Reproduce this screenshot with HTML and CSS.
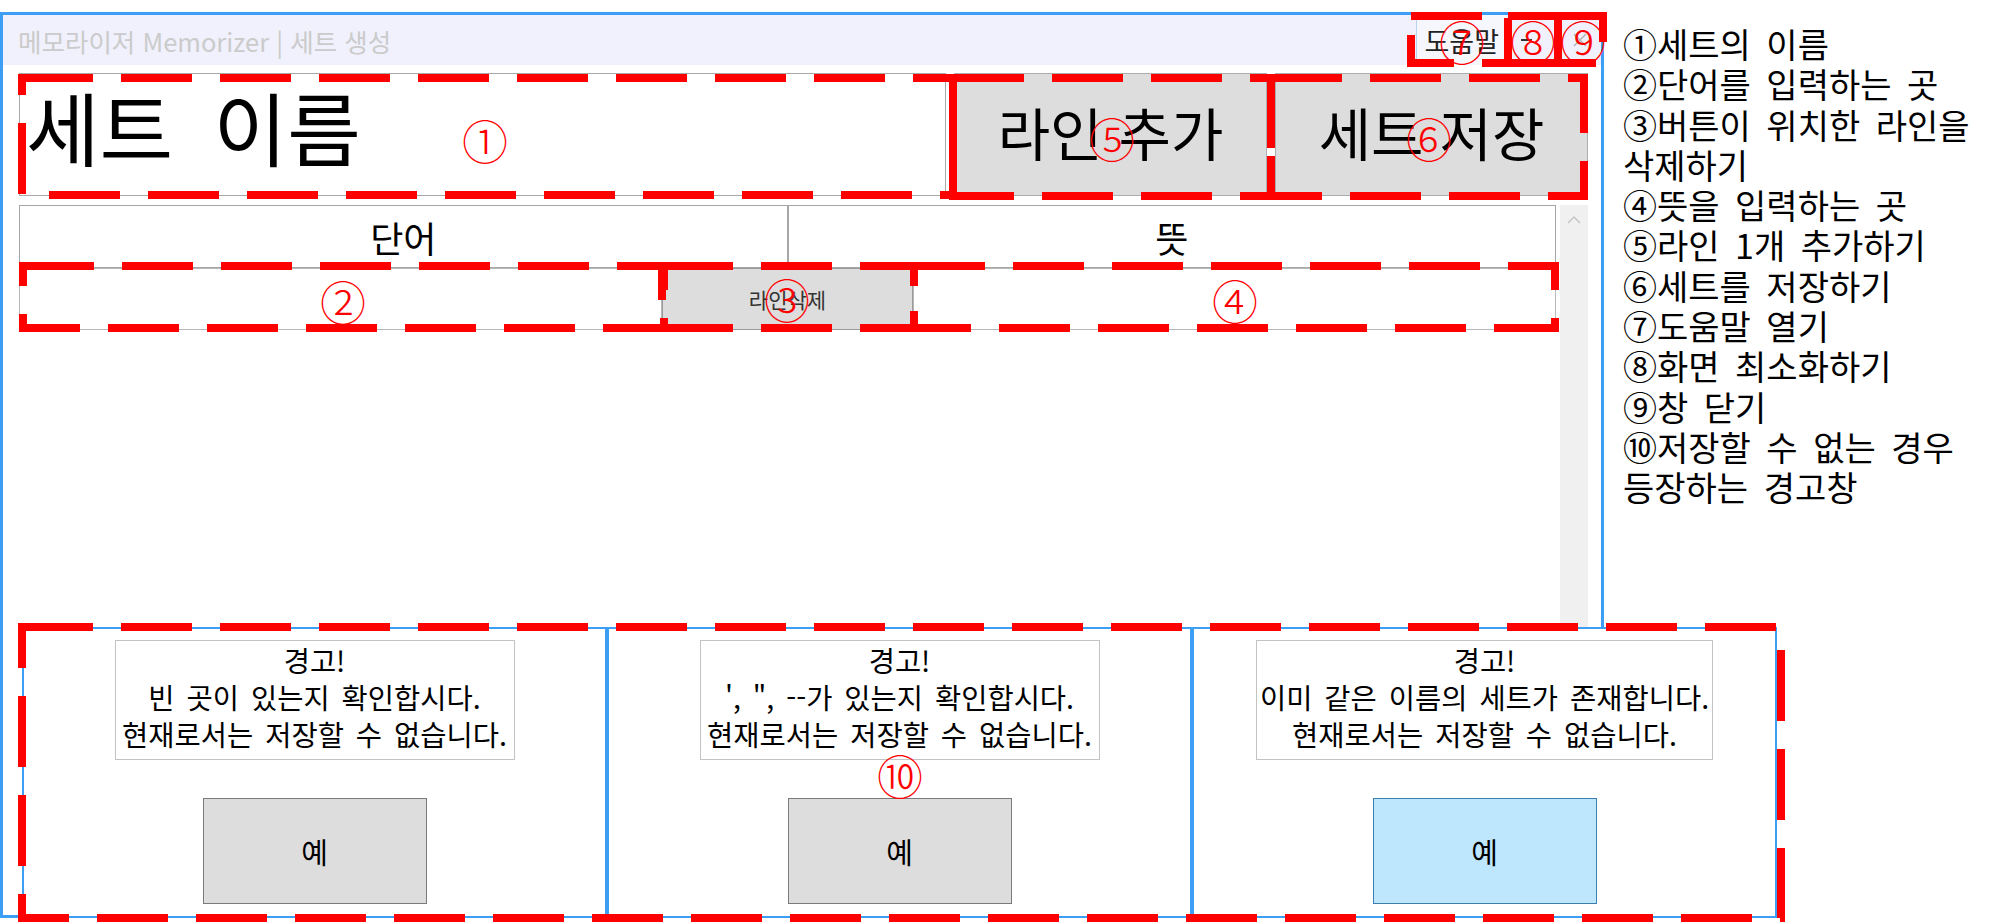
FILE: index.html
```html
<!DOCTYPE html>
<html lang="ko">
  <head>
    <meta charset="UTF-8" />
    <title>메모라이저 Memorizer | 세트 생성</title>
    <link rel="stylesheet" href="styles.css">
  </head>
  <body>
    <div class="desktop">
      <div class="app">
        <div class="titlebar">
          <span class="title">메모라이저 Memorizer | 세트 생성</span>
          <div class="title-buttons">
            <span class="help">도움말</span>
            <span class="minimize"></span>
            <svg class="close" width="14" height="14" viewBox="0 0 14 14">
              <path d="M1 1 L13 13 M13 1 L1 13" />
            </svg>
          </div>
        </div>

        <div class="app-body">
          <div class="name-row">
            <div class="name-box">세트 이름</div>
            <button class="big-btn">라인 추가</button>
            <button class="big-btn">세트 저장</button>
          </div>

          <div class="table-area">
            <div class="table">
              <div class="head-row">
                <div class="head-cell">단어</div>
                <div class="head-cell">뜻</div>
              </div>
              <div class="line-row">
                <div class="input"></div>
                <button class="del-btn">라인삭제</button>
                <div class="input"></div>
              </div>
            </div>
            <div class="scrollbar">
              <svg width="14" height="9" viewBox="0 0 14 9">
                <polyline points="1,8 7,2 13,8" />
              </svg>
            </div>
          </div>
        </div>
      </div>

      <div class="legend">
        <p>①세트의 이름</p>
        <p>②단어를 입력하는 곳</p>
        <p>③버튼이 위치한 라인을 삭제하기</p>
        <p>④뜻을 입력하는 곳</p>
        <p>⑤라인 1개 추가하기</p>
        <p>⑥세트를 저장하기</p>
        <p>⑦도움말 열기</p>
        <p>⑧화면 최소화하기</p>
        <p>⑨창 닫기</p>
        <p>⑩저장할 수 없는 경우 등장하는 경고창</p>
      </div>

      <!-- warning popups, they sit over the main window -->
      <div class="dialogs">
        <div class="dialog">
          <div class="message">경고!<br>빈 곳이 있는지 확인합시다.<br>현재로서는 저장할 수 없습니다.</div>
          <button class="ok-btn">예</button>
        </div>
        <div class="dialog">
          <div class="message">경고!<br>', ", --가 있는지 확인합시다.<br>현재로서는 저장할 수 없습니다.</div>
          <button class="ok-btn">예</button>
        </div>
        <div class="dialog">
          <div class="message wide">경고!<br>이미 같은 이름의 세트가 존재합니다.<br>현재로서는 저장할 수 없습니다.</div>
          <button class="ok-btn hover">예</button>
        </div>
      </div>

      <!-- red annotation marks -->
      <svg class="marks" width="2000" height="923" viewBox="0 0 2000 923">
        <g class="dash">
          <rect x="22" y="78" width="931" height="117" />
          <rect x="953" y="78" width="318" height="118" />
          <rect x="1271" y="78" width="313" height="118" />
          <rect x="1411" y="16" width="97" height="47" />
          <rect x="1508" y="16" width="50" height="47" />
          <rect x="1558" y="16" width="45" height="47" />
          <rect x="23" y="266" width="641" height="62" />
          <rect x="662" y="266" width="252" height="62" />
          <rect x="914" y="266" width="641" height="62" />
          <rect x="22" y="627" width="1759" height="291" />
        </g>
        <g class="nums">
          <text x="485" y="139">①</text>
          <text x="343" y="300">②</text>
          <text x="787" y="298">③</text>
          <text x="1235" y="299">④</text>
          <text x="1112" y="137">⑤</text>
          <text x="1429" y="137">⑥</text>
          <text x="1462" y="40">⑦</text>
          <text x="1533" y="40">⑧</text>
          <text x="1583" y="40">⑨</text>
          <text x="900" y="774">⑩</text>
        </g>
      </svg>
    </div>
  </body>
</html>
```

FILE: styles.css
```css
body {
  margin: 0;
  font-family: "Noto Sans CJK KR", "Noto Sans", sans-serif;
  color: #000;
  background-color: #fff;
}

.desktop {
  position: relative;
  width: 2000px;
  height: 923px;
  display: flex;
  align-items: flex-start;
  overflow: hidden;
}

.app {
  flex-shrink: 0;
  margin-top: 12px;
  width: 1604px;
  height: 906px;
  box-sizing: border-box;
  border: 3px solid #3d9ef6;
  display: flex;
  flex-direction: column;
  background-color: #fff;
}

.titlebar {
  height: 50px;
  flex-shrink: 0;
  background-color: #f0f1fc;
  display: flex;
  align-items: center;
  justify-content: space-between;
  padding-left: 15px;
}

.title {
  font-size: 25.5px;
  color: #cbcbcb;
}

.title-buttons {
  display: flex;
  align-items: center;
  height: 100%;
}

.help {
  height: 100%;
  display: flex;
  align-items: center;
  padding: 0 7px;
  margin-right: 15px;
  font-size: 27px;
  color: #222;
  background-color: #f6f6fd;
  border-left: 1px solid #b9d3f3;
}

.minimize {
  width: 11px;
  height: 2px;
  background-color: #333;
  margin-right: 41px;
}

.close {
  margin-right: 14px;
}

.close path {
  stroke: #b5b5b5;
  stroke-width: 1.5;
  fill: none;
}

.app-body {
  flex: 1;
  display: flex;
  flex-direction: column;
  gap: 9px;
  padding: 8px 13px 10px 16px;
}

.name-row {
  display: flex;
  gap: 8px;
  height: 123px;
}

.name-box {
  width: 927px;
  box-sizing: border-box;
  border: 1px solid #a9a9a9;
  display: flex;
  align-items: center;
  padding: 0 0 20px 6px;
  font-size: 80px;
  line-height: 1;
  word-spacing: 18px;
}

button {
  font-family: "Noto Sans CJK KR", "Noto Sans", sans-serif;
  color: #000;
  padding: 0;
  cursor: pointer;
}

.big-btn {
  width: 313px;
  box-sizing: border-box;
  border: 1px solid #adadad;
  background-color: #dddddd;
  font-size: 57px;
  line-height: 1;
  padding-bottom: 6px;
}

.table-area {
  flex: 1;
  display: flex;
  gap: 4px;
}

.table {
  width: 1537px;
  display: flex;
  flex-direction: column;
}

.head-row {
  display: flex;
  height: 63px;
}

.head-cell {
  flex: 1;
  box-sizing: border-box;
  border: 1px solid #a6a6a6;
  display: flex;
  justify-content: center;
  align-items: center;
  font-size: 36px;
  line-height: 1;
}

.line-row {
  display: flex;
  height: 62px;
}

.input {
  width: 643px;
  box-sizing: border-box;
  border: 1px solid #b8b8b8;
}

.del-btn {
  width: 251px;
  box-sizing: border-box;
  border: 1px solid #9a9a9a;
  background-color: #dddddd;
  font-size: 21px;
  color: #333;
}

.scrollbar {
  width: 28px;
  box-sizing: border-box;
  background-color: #f0f0f0;
  display: flex;
  justify-content: center;
  align-items: flex-start;
  padding-top: 10px;
}

.scrollbar polyline {
  stroke: #c6c6c6;
  stroke-width: 1.5;
  fill: none;
}

.legend {
  margin-left: 19px;
  padding-top: 24px;
  width: 377px;
  font-size: 34px;
  line-height: 40.3px;
  word-spacing: 6px;
  word-break: keep-all;
}

.legend p {
  margin: 0;
}

.dialogs {
  position: absolute;
  left: 22px;
  top: 627px;
  display: flex;
}

.dialog {
  width: 585px;
  height: 291px;
  box-sizing: border-box;
  border: 2px solid #3d9ef6;
  background-color: #fff;
  display: flex;
  flex-direction: column;
  align-items: center;
  padding-top: 11px;
}

.message {
  width: 400px;
  height: 120px;
  box-sizing: border-box;
  border: 1px solid #c3c3c3;
  text-align: center;
  font-size: 28.5px;
  line-height: 37px;
  word-spacing: 4px;
  white-space: nowrap;
  overflow: hidden;
}

.message.wide {
  width: 457px;
}

.ok-btn {
  margin-top: 38px;
  width: 224px;
  height: 106px;
  box-sizing: border-box;
  border: 1px solid #7a7a7a;
  background-color: #dddddd;
  font-size: 29px;
}

.ok-btn.hover {
  background-color: #bee6fd;
  border-color: #3c7fb1;
}

.marks {
  position: absolute;
  left: 0;
  top: 0;
  pointer-events: none;
}

.dash rect {
  fill: none;
  stroke: #ff0000;
  stroke-width: 8;
  stroke-dasharray: 71 28;
}

.nums text {
  fill: #ff0000;
  font-family: "Noto Sans CJK KR", sans-serif;
  font-size: 46px;
  font-weight: 300;
  text-anchor: middle;
  dominant-baseline: central;
}
```
